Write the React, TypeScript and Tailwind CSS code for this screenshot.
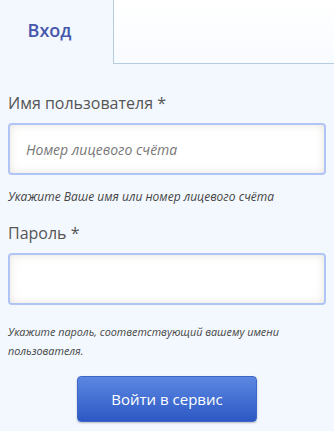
export default function App() {
  const font = { fontFamily: '"Open Sans", "Noto Sans", sans-serif' };
  return (
    <div className="w-[334px] h-[431px] bg-[#f3f8fe] overflow-hidden" style={font}>
      <div className="flex h-[64px]">
        <div className="w-[113px] flex items-center justify-center pb-[4px]">
          <span className="text-[18px] font-semibold text-[#4657ac] -ml-[14px]">Вход</span>
        </div>
        <div className="flex-1 border-l border-b border-[#b5cde0] bg-gradient-to-b from-white to-[#f8fbff]" />
      </div>
      <div className="px-[8px]">
        <div className="mt-[28px] text-[16px] leading-[22px] text-[#555]">Имя пользователя *</div>
        <div className="mt-[9px] h-[52px] rounded-[4px] border-2 border-[#b0c4f5] bg-white shadow-[inset_0_0_8px_rgba(200,195,180,0.45)] flex items-center pl-[16px]">
          <span className="text-[14px] italic text-[#777]">Номер лицевого счёта</span>
        </div>
        <div className="mt-[13px] text-[12px] italic text-[#444] leading-[17px]">Укажите Ваше имя или номер лицевого счёта</div>
        <div className="mt-[17px] text-[16px] leading-[22px] text-[#555]">Пароль *</div>
        <div className="mt-[9px] h-[52px] rounded-[4px] border-2 border-[#b0c4f5] bg-white shadow-[inset_0_0_8px_rgba(200,195,180,0.45)]" />
        <div className="mt-[17px] text-[10.8px] italic text-[#444] leading-[19px]">
          Укажите пароль, соответствующий вашему имени пользователя.
        </div>
        <div className="flex justify-center mt-[16px]">
          <button className="w-[180px] h-[46px] rounded-[4px] bg-gradient-to-b from-[#5c88e2] to-[#2d58c4] text-white text-[15px] shadow-[0_1px_2px_rgba(0,0,0,0.25)] border border-[#3e67c9]">
            Войти в сервис
          </button>
        </div>
      </div>
    </div>
  );
}
